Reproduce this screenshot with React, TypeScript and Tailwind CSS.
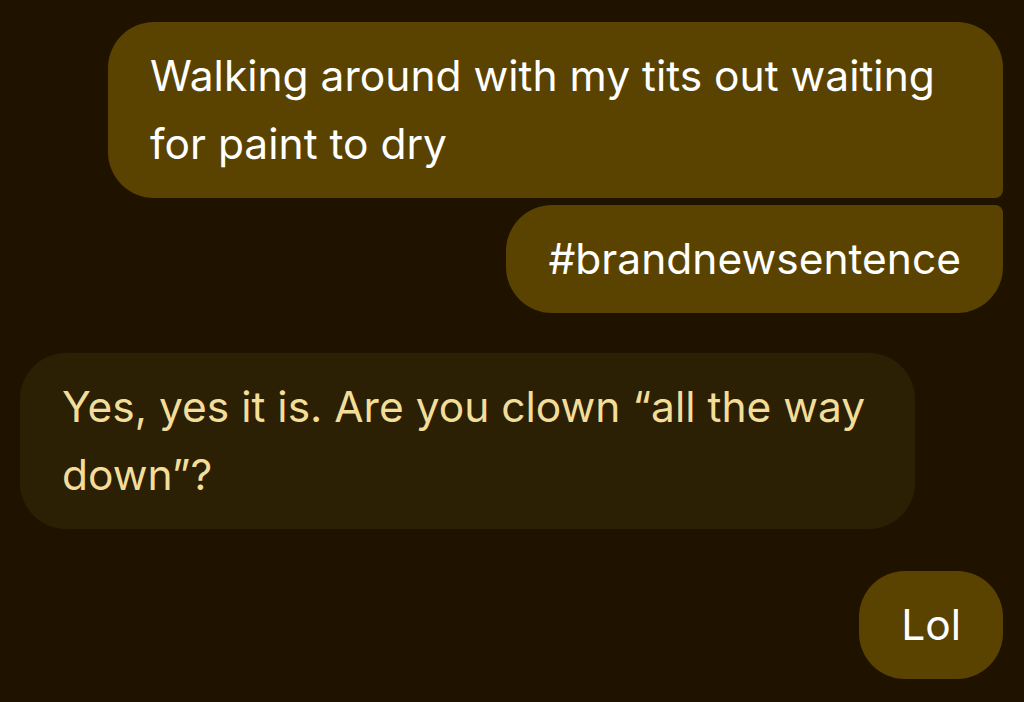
export default function App() {
  return (
    <div className="w-[1024px] h-[702px] overflow-hidden bg-[#1f1300] font-['Inter',sans-serif] text-[42.5px] leading-[68px]">
      <div className="flex flex-col pt-[22px] pl-[20px] pr-[21px]">
        <div className="flex flex-col items-end gap-[7px]">
          <div className="max-w-[895px] bg-[#5a4300] text-white px-[42px] py-[20px] rounded-[46px] rounded-br-[8px]">
            Walking around with my tits out waiting for paint to dry
          </div>
          <div className="max-w-[895px] bg-[#5a4300] text-white px-[42px] py-[20px] rounded-[46px] rounded-tr-[8px]">
            #brandnewsentence
          </div>
        </div>
        <div className="flex mt-[40px]">
          <div className="max-w-[895px] bg-[#2b2004] text-[#f2dd9b] px-[42px] py-[20px] rounded-[46px]">
            Yes, yes it is. Are you clown “all the way down”?
          </div>
        </div>
        <div className="flex justify-end mt-[42px]">
          <div className="bg-[#5a4300] text-white px-[42px] py-[20px] rounded-[46px]">
            Lol
          </div>
        </div>
      </div>
    </div>
  );
}
